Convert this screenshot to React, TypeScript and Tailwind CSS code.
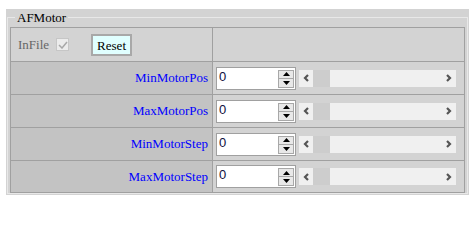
import React from "react";

const PARAMS = ["MinMotorPos", "MaxMotorPos", "MinMotorStep", "MaxMotorStep"];

function Spinner() {
  return (
    <div className="ml-auto mr-px mt-[2px] flex w-[16px] flex-col">
      <div className="flex h-[9px] items-center justify-center border border-[#a8a8a8] bg-[#e8e8e8]">
        <svg width="7" height="4" viewBox="0 0 7 4">
          <polygon points="0,4 3.5,0 7,4" fill="#000" />
        </svg>
      </div>
      <div className="flex h-[9px] items-center justify-center border border-t-0 border-[#a8a8a8] bg-[#e8e8e8]">
        <svg width="7" height="4" viewBox="0 0 7 4">
          <polygon points="0,0 3.5,4 7,0" fill="#000" />
        </svg>
      </div>
    </div>
  );
}

function ScrollBar() {
  return (
    <div className="flex h-[17px] w-[157px] items-center bg-[#f0f0f0]">
      <div className="flex w-[14px] justify-center">
        <svg width="6" height="8" viewBox="0 0 6 8">
          <polyline points="5,1 2,4 5,7" fill="none" stroke="#555" strokeWidth="2.2" />
        </svg>
      </div>
      <div className="h-[17px] w-[17px] shrink-0 bg-[#cdcdcd]" />
      <div className="h-[17px] flex-1 bg-[#f0f0f0]" />
      <div className="flex w-[14px] justify-center">
        <svg width="6" height="8" viewBox="0 0 6 8">
          <polyline points="1,1 4,4 1,7" fill="none" stroke="#555" strokeWidth="2.2" />
        </svg>
      </div>
    </div>
  );
}

export default function App() {
  return (
    <div className="h-[200px] w-[472px] bg-white pl-[6px] pt-[9px] font-['Liberation_Serif',serif] text-[13px]">
      <div className="h-[186px] w-[463px] bg-[#d3d3d3] pl-px pt-px">
        <fieldset className="h-[184px] w-[461px] border border-[#e8e8e8] pl-[2px] pt-[2px]">
          <legend className="ml-[5px] px-[2px] leading-[15px] text-black">AFMotor</legend>
          <table className="border-collapse">
            <tbody>
              <tr className="h-[34px]">
                <td className="w-[202px] border border-[#a0a0a0] p-0">
                  <div className="flex items-center pl-[7px]">
                    <span className="text-[#666]">InFile</span>
                    <div className="ml-[7px] flex h-[13px] w-[13px] items-center justify-center border border-[#c6c6c6] bg-[#ececec]">
                      <svg width="10" height="8" viewBox="0 0 10 8">
                        <polyline points="1,4 4,7 9,1" fill="none" stroke="#a8a8a8" strokeWidth="1.5" />
                      </svg>
                    </div>
                    <button className="ml-[22px] h-[22px] w-[41px] border-2 border-[#a8a8a8] bg-[#e0ffff] font-['Liberation_Serif',serif] text-[13px] text-black">
                      Reset
                    </button>
                  </div>
                </td>
                <td className="w-[252px] border border-[#a0a0a0] p-0" />
              </tr>
              {PARAMS.map((name, i) => (
                <tr key={name} className={i === 3 ? "h-[32px]" : "h-[33px]"}>
                  <td className="border border-[#a0a0a0] bg-[#c3c3c3] p-0 pr-[4px] text-right text-[#0000ff]">
                    {name}
                  </td>
                  <td className="border border-[#a0a0a0] p-0 pl-[3px]">
                    <div className="flex items-center gap-[3px]">
                      <div className="flex h-[23px] w-[80px] border border-[#a0a0a0] bg-white">
                        <span className="pl-[2px] pt-px font-['Liberation_Sans',sans-serif] text-[13px] leading-[15px] text-[#101040]">
                          0
                        </span>
                        <Spinner />
                      </div>
                      <ScrollBar />
                    </div>
                  </td>
                </tr>
              ))}
            </tbody>
          </table>
        </fieldset>
      </div>
    </div>
  );
}
